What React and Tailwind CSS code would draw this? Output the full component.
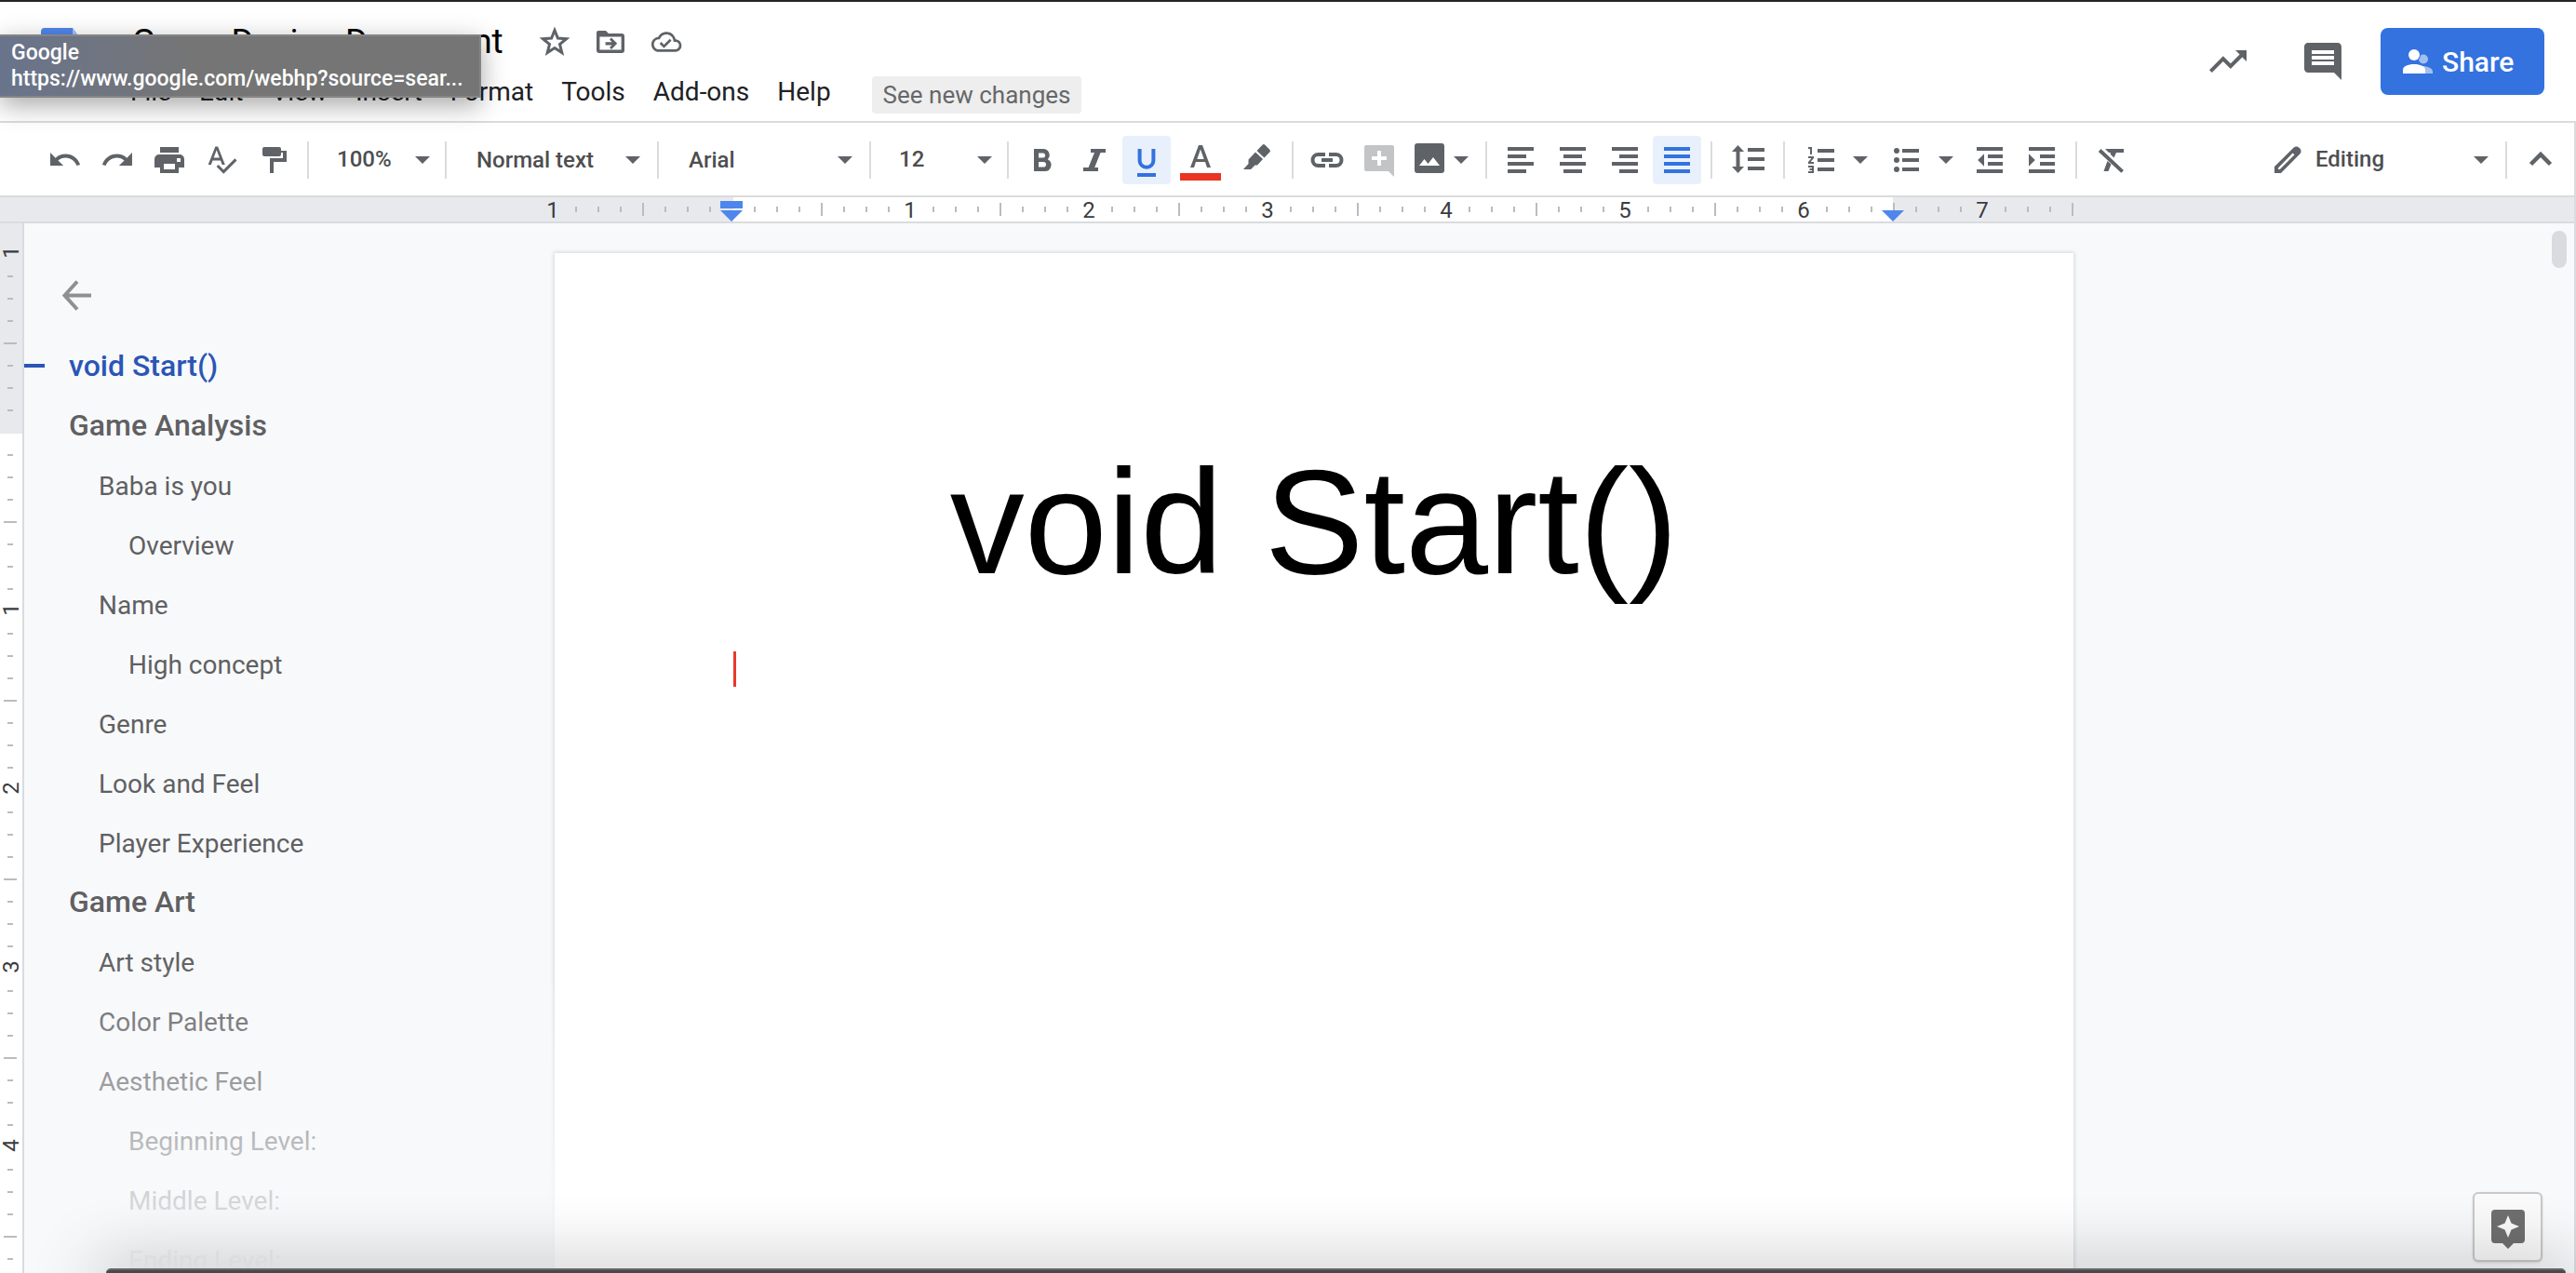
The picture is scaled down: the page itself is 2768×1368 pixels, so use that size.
import React from "react";

const HEADER_MENUS = ["File", "Edit", "View", "Insert", "Format", "Tools", "Add-ons", "Help"];

const OUTLINE = [
  { text: "void Start()", level: 0, active: true },
  { text: "Game Analysis", level: 0 },
  { text: "Baba is you", level: 1 },
  { text: "Overview", level: 2 },
  { text: "Name", level: 1 },
  { text: "High concept", level: 2 },
  { text: "Genre", level: 1 },
  { text: "Look and Feel", level: 1 },
  { text: "Player Experience", level: 1 },
  { text: "Game Art", level: 0 },
  { text: "Art style", level: 1 },
  { text: "Color Palette", level: 1 },
  { text: "Aesthetic Feel", level: 1 },
  { text: "Beginning Level:", level: 2 },
  { text: "Middle Level:", level: 2 },
  { text: "Ending Level:", level: 2 },
];

const LEVEL_CLASS = [
  "pl-12 text-[32px] font-medium",
  "pl-20 pt-1 text-[28px]",
  "pl-28 pt-1 text-[28px]",
];

/* Toolbar icons are drawn on an 18-unit grid, two pixels per unit. */
function Icon({ children, box = "0 0 18 18", className = "size-9" }) {
  return (
    <svg viewBox={box} className={`shrink-0 ${className}`} fill="currentColor" aria-hidden="true">
      {children}
    </svg>
  );
}

function Caret() {
  return (
    <svg viewBox="0 0 16 8" className="h-2 w-4 shrink-0" fill="currentColor" aria-hidden="true">
      <path d="M0 0h16L8 8z" />
    </svg>
  );
}

function Tool({ label, children, className = "w-14", active = false }) {
  return (
    <button
      type="button"
      aria-label={label}
      aria-pressed={active}
      className={`flex h-[52px] shrink-0 items-center justify-center ${className}`}
    >
      <span
        className={
          active
            ? "flex size-[52px] items-center justify-center rounded bg-[#e8f0fc] text-[#3372df]"
            : "flex items-center justify-center gap-2.5"
        }
      >
        {children}
      </span>
    </button>
  );
}

function Sep() {
  return <div className="mx-2 h-10 w-0.5 shrink-0 bg-[#dadbdc]" />;
}

function Picker({ label, value, options, className, selectClass, caretClass }) {
  return (
    <label className={`grid shrink-0 items-center ${className}`}>
      <span className="sr-only">{label}</span>
      <select
        defaultValue={value}
        className={`col-start-1 row-start-1 h-[52px] w-full appearance-none bg-transparent text-2xl font-medium text-[#4d4e50] outline-none ${selectClass}`}
      >
        {options.map((o) => (
          <option key={o}>{o}</option>
        ))}
      </select>
      <span className={`pointer-events-none col-start-1 row-start-1 justify-self-end ${caretClass}`}>
        <Caret />
      </span>
    </label>
  );
}

function Header() {
  return (
    <header className="flex h-[130px] shrink-0 items-start justify-between border-t-2 border-[#262427] bg-white pr-[34px]">
      <div className="flex">
        <svg viewBox="0 0 44 60" className="mx-11 mt-7 h-[60px] w-11" aria-hidden="true">
          <path d="M4 0h30l10 14v42a4 4 0 0 1-4 4H4a4 4 0 0 1-4-4V4a4 4 0 0 1 4-4z" fill="#5086ec" />
          <path d="M34 0l10 14H34z" fill="#a6c2f7" />
          <path d="M10 28h24v3H10zM10 35h24v3H10zM10 42h16v3H10z" fill="#fff" />
        </svg>
        <div className="flex flex-col pl-2">
          <div className="flex h-[66px] items-center pt-5 text-[#5f6368]">
            <input
              aria-label="Document title"
              defaultValue="Game Design Document"
              className="h-12 w-[438px] bg-transparent pl-0.5 text-[37px] leading-[48px] text-black outline-none"
            />
            <button type="button" aria-label="Star" className="flex w-[60px]">
              <Icon box="0 0 36 36">
                <path
                  d="M18 5.5l3.4 8.6 9.2.6-7.1 5.9 2.3 9-7.8-5-7.8 5 2.3-9-7.1-5.9 9.2-.6z"
                  fill="none"
                  stroke="currentColor"
                  strokeWidth="3"
                />
              </Icon>
            </button>
            <button type="button" aria-label="Move" className="flex w-[60px] pr-1">
              <Icon>
                <path
                  fillRule="evenodd"
                  d="M2.500 3h4l1.500 1.500h7A1.500 1.500 0 0 1 16.500 6v7.500A1.500 1.500 0 0 1 15 15H3a1.500 1.500 0 0 1-1.500-1.500V4a1 1 0 0 1 1-1zM3.200 6.200v7.100h11.600V6.200z"
                />
                <path d="M9.500 6.800l3.100 3.100-3.100 3.100-1-1 1.300-1.300H6.300V9.100h3.500L8.500 7.800z" />
              </Icon>
            </button>
            <button type="button" aria-label="Saved to cloud" className="flex w-[60px]">
              <Icon box="0 0 24 24">
                <path d="M19.350 10.040C18.670 6.590 15.640 4 12 4 9.110 4 6.600 5.640 5.350 8.040 2.340 8.360 0 10.910 0 14c0 3.310 2.690 6 6 6h13c2.760 0 5-2.240 5-5 0-2.640-2.050-4.780-4.650-4.960zM19 18H6c-2.210 0-4-1.790-4-4 0-2.050 1.530-3.760 3.560-3.970l1.070-.110.5-.950C8.080 7.140 9.940 6 12 6c2.620 0 4.880 1.860 5.390 4.430l.3 1.500 1.530.110A2.980 2.980 0 0 1 22 15c0 1.650-1.350 3-3 3zm-9-3.820l-2.090-2.090L6.500 13.500 10 17l6.010-6.010-1.410-1.410z" transform="translate(1.300 1.200) scale(.9)" />
              </Icon>
            </button>
          </div>
          <nav className="flex h-[62px] items-center gap-[30px] text-[28px] text-[#202124]">
            {HEADER_MENUS.map((m) => (
              <button type="button" key={m}>
                {m}
              </button>
            ))}
            <button
              type="button"
              className="ml-3.5 mt-1.5 h-10 rounded bg-[#eeeeee] px-3 text-[26px] text-[#666769]"
            >
              See new changes
            </button>
          </nav>
        </div>
      </div>
      <div className="flex items-center pt-7 text-[#5f6368]">
        <button type="button" aria-label="Activity" className="mr-[54px]">
          <Icon box="0 0 24 24" className="size-12">
            <path d="M16 6l2.290 2.290-4.880 4.880-4-4L2 16.590 3.410 18l6-6 4 4 6.300-6.290L22 12V6z" />
          </Icon>
        </button>
        <button type="button" aria-label="Comment history" className="mr-[38px]">
          <Icon box="0 0 24 24" className="size-12">
            <path d="M21.990 4c0-1.100-.890-2-1.990-2H4c-1.100 0-2 .9-2 2v12c0 1.100.9 2 2 2h14l4 4-.010-18zM18 14H6v-2h12v2zm0-3H6V9h12v2zm0-3H6V6h12v2z" />
          </Icon>
        </button>
        <button
          type="button"
          className="flex h-[72px] w-44 items-center gap-2.5 rounded-lg bg-[#3372df] pl-6 text-[30px] font-medium text-white"
        >
          <svg viewBox="0 0 32 26" className="h-[26px] w-8" aria-hidden="true">
            <g fill="#a3bff1">
              <circle cx="22" cy="10.500" r="5" />
              <path d="M20 18c7 0 12 2.500 12 6v2H20z" />
            </g>
            <circle cx="12" cy="6" r="7" fill="#3372df" />
            <g fill="#fff">
              <circle cx="12" cy="6" r="6" />
              <path d="M12 16c7 0 12 2.500 12 6v4H0v-4c0-3.500 5-6 12-6z" />
            </g>
          </svg>
          Share
        </button>
      </div>
    </header>
  );
}

function Toolbar() {
  return (
    <div className="flex h-[82px] shrink-0 items-center border-y-2 border-r-2 border-[#dadbdc] bg-white pl-[42px] pr-2 pt-0.5 text-[#5f6368]">
      <Tool label="Undo">
        <Icon box="0.7 0.6 23 23">
          <path d="M12.500 8c-2.650 0-5.050.990-6.900 2.600L2 7v9h9l-3.620-3.620c1.390-1.160 3.160-1.880 5.120-1.880 3.540 0 6.550 2.310 7.600 5.500l2.370-.780C21.080 11.030 17.150 8 12.500 8z" />
        </Icon>
      </Tool>
      <Tool label="Redo">
        <Icon box="0.3 0.6 23 23">
          <path d="M18.400 10.600C16.550 8.990 14.150 8 11.500 8c-4.650 0-8.580 3.030-9.960 7.220L3.900 16c1.050-3.190 4.050-5.500 7.600-5.500 1.950 0 3.730.720 5.120 1.880L13 16h9V7l-3.600 3.600z" />
        </Icon>
      </Tool>
      <Tool label="Print">
        <Icon>
          <path d="M4 2h10v3H4z" />
          <path
            fillRule="evenodd"
            d="M3.500 6h11A2.500 2.500 0 0 1 17 8.500V13h-3v3H4v-3H1V8.500A2.500 2.500 0 0 1 3.500 6zM6 11v3h6v-3zM13 8v2h2V8z"
          />
        </Icon>
      </Tool>
      <Tool label="Spelling and grammar check">
        <Icon box="0 0.7 24 24">
          <path d="M12.450 16h2.090L9.430 3H7.570L2.460 16h2.090l1.120-3h5.640l1.140 3zm-6.020-5L8.500 5.480 10.570 11H6.430zm15.160.590l-8.090 8.090L9.830 16l-1.410 1.410 5.090 5.090L23 13l-1.410-1.410z" />
        </Icon>
      </Tool>
      <Tool label="Paint format">
        <Icon>
          <path d="M4 2h8a1 1 0 0 1 1 1v1h3v6H9v6H7V8h7V5h-1v1a1 1 0 0 1-1 1H4a1 1 0 0 1-1-1V3a1 1 0 0 1 1-1z" />
        </Icon>
      </Tool>
      <Sep />
      <Picker label="Zoom" value="100%" options={["50%", "100%", "200%"]} className="w-[130px]" selectClass="pl-[22px] pb-0.5" caretClass="pr-2" />
      <Sep />
      <Picker label="Styles" value="Normal text" options={["Normal text", "Title", "Heading 1"]} className="w-[210px]" selectClass="pl-6" caretClass="pr-2.5" />
      <Sep />
      <Picker label="Font" value="Arial" options={["Arial", "Georgia"]} className="w-[210px]" selectClass="pl-6" caretClass="pr-2.5" />
      <Sep />
      <Picker label="Font size" value="12" options={["11", "12", "14"]} className="w-[130px]" selectClass="pl-[22px] pb-0.5" caretClass="pr-2" />
      <Sep />
      <Tool label="Bold">
        <Icon>
          <path
            fillRule="evenodd"
            d="M4.500 3h5a3.300 3.300 0 0 1 2.400 5.600A3.400 3.400 0 0 1 10 15H4.500zM7 5.200v2.500h2.300a1.250 1.250 0 0 0 0-2.500zM7 10v2.800h2.600a1.400 1.400 0 0 0 0-2.800z"
          />
        </Icon>
      </Tool>
      <Tool label="Italic">
        <Icon>
          <path d="M7 3h8v2h-2.700l-3.200 8H11v2H3v-2h2.800L9 5H7z" />
        </Icon>
      </Tool>
      <Tool label="Underline" active>
        <Icon>
          <path d="M4.300 3v6.200a4.700 4.700 0 0 0 9.400 0V3h-2v6.200a2.700 2.700 0 0 1-5.400 0V3zM4 16h10v2H4z" />
        </Icon>
      </Tool>
      <Tool label="Text color" className="w-[60px]">
        <Icon box="0 0 44 44" className="size-11">
          <path fillRule="evenodd" d="M20 6h4l9 24h-4l-2-6H17l-2 6h-4zM22 10.500L18.300 21h7.400z" />
          <path d="M0 36h44v8H0z" fill="#ea3323" />
        </Icon>
      </Tool>
      <Tool label="Highlight color" className="w-[60px]">
        <Icon box="0 0 36 36">
          <path d="M24.500 1.800a2 2 0 0 1 2.800 0l5 5a2 2 0 0 1 0 2.800L26.500 15.500 18.500 8z" />
          <path d="M17 9.500l8 7.500-6 6.500h-2.500L12 28H4l5.500-6v-4.500z" />
        </Icon>
      </Tool>
      <Sep />
      <Tool label="Insert link">
        <Icon box="0 0 36 36">
          <path d="M16 10H8.500a8 8 0 0 0 0 16H16v-4H8.500a4 4 0 0 1 0-8H16zM20 10h7.500a8 8 0 0 1 0 16H20v-4h7.500a4 4 0 0 0 0-8H20zM12 16h12v4H12z" />
        </Icon>
      </Tool>
      <Tool label="Add comment">
        <Icon box="0 0 36 36" className="size-9 text-[#c3c4c6]">
          <path
            fillRule="evenodd"
            d="M4 2h28a2 2 0 0 1 2 2v32l-6-6H4a2 2 0 0 1-2-2V4a2 2 0 0 1 2-2zM16 8v6h-6v4h6v6h4v-6h6v-4h-6V8z"
          />
        </Icon>
      </Tool>
      <Tool label="Insert image" className="w-[78px]">
        <Icon box="0 0 32 36" className="h-9 w-8">
          <path
            fillRule="evenodd"
            d="M3 0h26a3 3 0 0 1 3 3v26a3 3 0 0 1-3 3H3a3 3 0 0 1-3-3V3a3 3 0 0 1 3-3zM5 24h22l-7-9-5.500 7-4-5z"
          />
        </Icon>
        <Caret />
      </Tool>
      <Sep />
      <Tool label="Left align">
        <Icon>
          <path d="M2 2h14v2H2zM2 6h10v2H2zM2 10h14v2H2zM2 14h10v2H2z" />
        </Icon>
      </Tool>
      <Tool label="Center align">
        <Icon>
          <path d="M2 2h14v2H2zM4 6h10v2H4zM2 10h14v2H2zM4 14h10v2H4z" />
        </Icon>
      </Tool>
      <Tool label="Right align">
        <Icon>
          <path d="M2 2h14v2H2zM6 6h10v2H6zM2 10h14v2H2zM6 14h10v2H6z" />
        </Icon>
      </Tool>
      <Tool label="Justify" active>
        <Icon>
          <path d="M2 2h14v2H2zM2 6h14v2H2zM2 10h14v2H2zM2 14h14v2H2z" />
        </Icon>
      </Tool>
      <Sep />
      <Tool label="Line spacing" className="w-[60px]">
        <Icon box="0 0 36 36">
          <path d="M7.500 2L14 9H9.500v16H14l-6.500 7L1 25h4.500V9H1zM18 5h18v4H18zM18 15h18v4H18zM18 25h18v4H18z" />
        </Icon>
      </Tool>
      <Sep />
      <Tool label="Numbered list" className="w-[92px] pl-0.5">
        <Icon box="0 0 36 36">
          <path d="M14 6h18v4H14zM14 16h18v4H14zM14 26h18v4H14z" />
          <path d="M4 4h4v8H6V6H4zM4 14h6v2l-3.500 4H10v2H4v-2l3.500-4H4zM4 24h6v8H4v-2h4v-1H5.500v-2H8v-1H4z" />
        </Icon>
        <span className="pl-1.5">
          <Caret />
        </span>
      </Tool>
      <Tool label="Bulleted list" className="w-[92px] pl-0.5">
        <Icon box="0 0 36 36">
          <circle cx="7" cy="8" r="3" />
          <circle cx="7" cy="18" r="3" />
          <circle cx="7" cy="28" r="3" />
          <path d="M13 6h18v4H13zM13 16h18v4H13zM13 26h18v4H13z" />
        </Icon>
        <span className="pl-1.5">
          <Caret />
        </span>
      </Tool>
      <Tool label="Decrease indent">
        <Icon>
          <path d="M2 2h14v2H2zM8 6h8v2H8zM8 10h8v2H8zM2 14h14v2H2zM6 5.600v6.800L2.600 9z" />
        </Icon>
      </Tool>
      <Tool label="Increase indent">
        <Icon>
          <path d="M2 2h14v2H2zM8 6h8v2H8zM8 10h8v2H8zM2 14h14v2H2zM2 5.600v6.800L5.400 9z" />
        </Icon>
      </Tool>
      <Sep />
      <Tool label="Clear formatting">
        <Icon box="0 0 36 36">
          <path d="M12 6h20v4h-8l-2.500 5.500-4-4L18 10h-2zM7.500 6L32 29l-2.700 2.800L4.800 9zM14.500 19l4 3.500-3 7.500h-5z" />
        </Icon>
      </Tool>
      <div className="ml-auto flex items-center">
        <label className="grid w-[254px] items-center">
          <span className="sr-only">Mode</span>
          <select
            defaultValue="Editing"
            className="col-start-1 row-start-1 h-[52px] w-full appearance-none bg-transparent pb-0.5 pl-[58px] text-2xl font-medium text-[#4d4e50] outline-none"
          >
            <option>Editing</option>
            <option>Suggesting</option>
            <option>Viewing</option>
          </select>
          <span className="pointer-events-none col-start-1 row-start-1 flex items-center justify-between pl-2.5 pr-2.5">
            <Icon box="0 0 36 36">
              <path
                fillRule="evenodd"
                d="M4 32v-7L24.500 4.800a4.200 4.200 0 0 1 6 0l.8.8a4.200 4.200 0 0 1 0 6L11 32zM8 26.500V28h1.800L25.500 12.300l-1.900-1.900z"
              />
            </Icon>
            <Caret />
          </span>
        </label>
        <Sep />
        <Tool label="Hide the menus">
          <Icon box="0 0 36 36">
            <path d="M7.500 22.500L18 12l10.500 10.500" fill="none" stroke="currentColor" strokeWidth="4.500" />
          </Icon>
        </Tool>
      </div>
    </div>
  );
}

function TopRuler() {
  return (
    <div className="grid h-7 shrink-0 grid-cols-[26px_minmax(0,570fr)_1632px_minmax(0,538fr)] border-b-2 border-r-2 border-[#dadbde] bg-[#e8e9ed]">
      <div className="col-start-3 grid grid-cols-[minmax(0,1fr)]">
        <div className="col-start-1 row-start-1 ml-48 mr-[194px] bg-white" />
        <div className="col-start-1 row-start-1 -ml-[13px] flex">
          {Array.from({ length: 69 }, (_, i) => (
            <div key={i} className="flex w-6 shrink-0 items-center justify-center">
              {i % 8 === 0 ? (
                i !== 8 && (
                  <span className="pr-0.5 pt-0.5 text-2xl leading-6 text-[#3b3c3f]">{Math.abs(i / 8 - 1)}</span>
                )
              ) : (
                <div className={i % 4 === 0 ? "h-3.5 w-0.5 bg-[#bbbcbe]" : "h-1.5 w-0.5 bg-[#bbbcbe]"} />
              )}
            </div>
          ))}
        </div>
        <div className="col-start-1 row-start-1 ml-[178px] mr-[182px] flex items-end justify-between">
          <svg viewBox="0 0 24 24" className="size-6" fill="#4f86ec" aria-hidden="true">
            <path d="M0 2h24v8H0zM0 12h24L12 24z" />
          </svg>
          <svg viewBox="0 0 24 12" className="h-3 w-6" fill="#4f86ec" aria-hidden="true">
            <path d="M0 0h24L12 12z" />
          </svg>
        </div>
      </div>
    </div>
  );
}

function SideRuler() {
  return (
    <div className="grid overflow-hidden border-r-2 border-[#dadbde] bg-white">
      <div className="col-start-1 row-start-1 h-[226px] bg-[#e8e9ed]" />
      <div className="col-start-1 row-start-1 h-0 pt-[21px]">
        {Array.from({ length: 46 }, (_, i) => (
          <div key={i} className="flex h-6 w-[22px] items-center justify-center">
            {i % 8 === 0 ? (
              i !== 8 && (
                <span className="-rotate-90 pl-1 pt-0.5 text-2xl leading-6 text-[#3b3c3f]">
                  {Math.abs(i / 8 - 1)}
                </span>
              )
            ) : (
              <div className={i % 4 === 0 ? "h-0.5 w-3.5 bg-[#bbbcbe]" : "h-0.5 w-1.5 bg-[#bbbcbe]"} />
            )}
          </div>
        ))}
      </div>
    </div>
  );
}

function Outline() {
  return (
    <aside className="relative overflow-hidden pt-14">
      <button type="button" aria-label="Close document outline" className="ml-[37px] block text-[#8f9092]">
        <Icon box="0 0 40 44" className="h-11 w-10">
          <path
            d="M20 6.500L6.500 21.500 20 36.500M6.500 21.500H35"
            fill="none"
            stroke="currentColor"
            strokeWidth="4"
          />
        </Icon>
      </button>
      <ul className="pt-[21px] text-[#5f6062]">
        {OUTLINE.map((item) => (
          <li key={item.text} className="flex h-16 items-center">
            <a
              href="#outline"
              className={`relative whitespace-nowrap ${LEVEL_CLASS[item.level]} ${item.active ? "text-[#2a56b5]" : ""}`}
            >
              {item.active && <span className="absolute left-0 top-1/2 h-1 w-[22px] -translate-y-1/2 bg-[#2a56b5]" />}
              {item.text}
            </a>
          </li>
        ))}
      </ul>
      <div className="pointer-events-none absolute inset-x-0 bottom-0 h-[340px] bg-gradient-to-b from-[#f8f9fb]/0 to-[#f8f9fb]" />
    </aside>
  );
}

export default function App() {
  return (
    <div className="relative flex h-screen flex-col overflow-hidden bg-[#f8f9fb] font-['Roboto',sans-serif]">
      <Header />
      <Toolbar />
      <TopRuler />
      <div className="grid min-h-0 flex-1 grid-cols-[26px_minmax(0,570fr)_1632px_minmax(0,538fr)] border-r-2 border-[#dadbde]">
        <SideRuler />
        <Outline />
        <main className="mt-8 bg-white px-48 pt-48 font-['Liberation_Sans',Arial,sans-serif] text-black shadow-[0_0_4px_1px_rgba(60,64,67,0.18)]">
          <h1 className="text-center text-[160px] leading-[194px]">void Start()</h1>
          <div className="mt-[42px] h-[38px] w-[3px] bg-[#e8382c]" />
        </main>
        <div className="flex flex-col items-end justify-between pb-3 pt-2">
          <div className="mr-2 h-10 w-4 rounded-full bg-[#dadbde]" />
          <button
            type="button"
            aria-label="Explore"
            className="mr-[34px] flex size-[75px] items-center justify-center rounded-md border-2 border-[#c9c9ca] bg-[#fafafa] shadow-sm"
          >
            <svg viewBox="0 0 36 42" className="mt-1 h-[42px] w-9" fill="#6f6f6f" aria-hidden="true">
              <path
                fillRule="evenodd"
                d="M4 0h28a4 4 0 0 1 4 4v28a4 4 0 0 1-4 4h-8l-6 6-6-6H4a4 4 0 0 1-4-4V4a4 4 0 0 1 4-4zM18 6l-3.500 8.500L6 18l8.500 3.500L18 30l3.500-8.500L30 18l-8.500-3.500z"
              />
            </svg>
          </button>
        </div>
      </div>
      <div className="pointer-events-none absolute bottom-0 left-[114px] right-[11px] h-[5px] rounded-t-lg border-t-2 border-[#666668] bg-[#49494b] shadow-[0_10px_70px_14px_rgba(0,0,0,0.3)]" />
      <div
        role="tooltip"
        className="absolute left-0 top-[37px] w-[517px] border-2 border-l-0 border-[#858585] bg-gradient-to-r from-[#69748c] to-[#757575] to-40% pb-1 pl-3 pt-1 text-[23px] font-medium leading-7 text-white shadow-[0_8px_28px_rgba(0,0,0,0.35)]"
      >
        <p>Google</p>
        <p className="whitespace-nowrap">https://www.google.com/webhp?source=sear...</p>
      </div>
    </div>
  );
}
